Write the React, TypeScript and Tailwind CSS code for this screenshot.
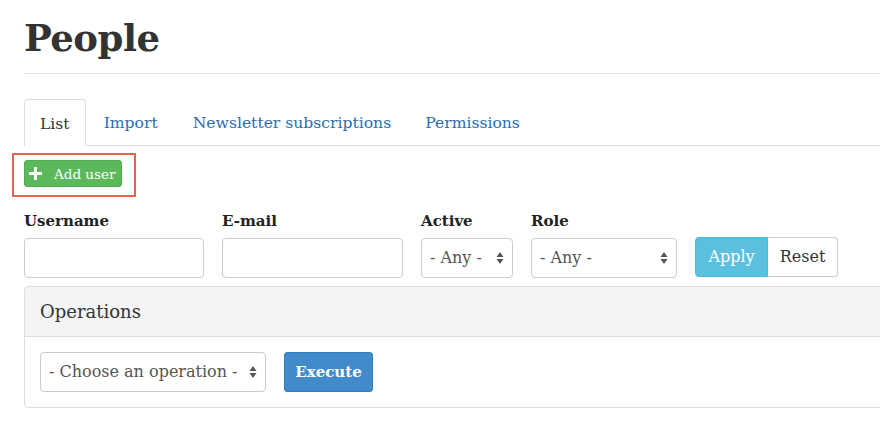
import React from "react";

const serif = { fontFamily: '"DejaVu Serif", "Liberation Serif", serif' };

function Arrows() {
  return (
    <svg width="8" height="14" viewBox="0 0 8 14" className="shrink-0">
      <path d="M4 1 L7.5 6 H0.5 Z" fill="#555" />
      <path d="M4 13 L7.5 8 H0.5 Z" fill="#555" />
    </svg>
  );
}

function FakeSelect({ label, w }: { label: string; w: string }) {
  return (
    <div
      className={`${w} h-[40px] flex items-center justify-between pl-[8px] pr-[8px] border border-[#ccc] rounded-[4px] bg-white text-[16px] text-[#555]`}
    >
      <span className="whitespace-nowrap">{label}</span>
      <Arrows />
    </div>
  );
}

export default function App() {
  return (
    <div className="w-[880px] h-[424px] overflow-hidden bg-white text-[#333]" style={serif}>
      <div className="pl-[24px]">
        <h1 className="pt-[15px] text-[37px] leading-[47px] font-bold text-[#333] tracking-[-0.5px]">People</h1>
        <div className="mt-[11px] border-t border-[#e5e5e5]" />
        <div className="mt-[25px] flex items-end border-b border-[#ddd] h-[47px] text-[15.6px]">
          <div className="h-[47px] px-[15px] pt-[5px] flex items-center border border-[#ddd] border-b-white rounded-t-[4px] -mb-px bg-white text-[#333]">
            List
          </div>
          <div className="h-[47px] px-[18px] pt-[5px] flex items-center text-[#2a6db0]">Import</div>
          <div className="h-[47px] px-[17px] pt-[5px] flex items-center text-[#2a6db0]">Newsletter subscriptions</div>
          <div className="h-[47px] px-[17px] pt-[5px] flex items-center text-[#2a6db0]">Permissions</div>
        </div>
        <div className="mt-[7px] -ml-[12px] w-[124px] h-[44px] border-2 border-[#e8604f] pl-[10px] pt-[5px]">
          <div className="w-[98px] h-[27px] bg-[#5cb85c] border border-[#4cae4c] rounded-[3px] flex items-center pl-[4px] gap-[12px] text-white text-[13.5px] whitespace-nowrap">
            <svg width="13" height="13" viewBox="0 0 13 13">
              <path d="M5 0 H8 V5 H13 V8 H8 V13 H5 V8 H0 V5 H5 Z" fill="#fff" />
            </svg>
            <span className="pt-px">Add user</span>
          </div>
        </div>
        <div className="mt-[13px] flex items-end">
          <div className="flex flex-col w-[180px] mr-[18px]">
            <label className="text-[15px] font-bold text-[#222] leading-[22px]">Username</label>
            <div className="mt-[6px] h-[40px] border border-[#ccc] rounded-[4px]" />
          </div>
          <div className="flex flex-col w-[181px] mr-[18px]">
            <label className="text-[15px] font-bold text-[#222] leading-[22px]">E-mail</label>
            <div className="mt-[6px] h-[40px] border border-[#ccc] rounded-[4px]" />
          </div>
          <div className="flex flex-col w-[92px] mr-[18px]">
            <label className="text-[15px] font-bold text-[#222] leading-[22px]">Active</label>
            <div className="mt-[6px]"><FakeSelect label="- Any -" w="w-[92px]" /></div>
          </div>
          <div className="flex flex-col w-[146px] mr-[18px]">
            <label className="text-[15px] font-bold text-[#222] leading-[22px]">Role</label>
            <div className="mt-[6px]"><FakeSelect label="- Any -" w="w-[146px]" /></div>
          </div>
          <div className="flex mb-px">
            <div className="w-[73px] h-[40px] bg-[#5bc0de] border border-[#46b8da] rounded-l-[4px] flex items-center justify-center text-white text-[16px]">Apply</div>
            <div className="w-[70px] h-[40px] bg-white border border-[#ccc] border-l-0 rounded-r-[4px] flex items-center justify-center text-[#333] text-[16px]">Reset</div>
          </div>
        </div>
        <div className="mt-[8px] w-[880px] border border-[#ddd] rounded-[4px]">
          <div className="h-[50px] bg-[#f4f4f4] border-b border-[#ddd] flex items-center pl-[15px] text-[18px] text-[#333] rounded-t-[4px]">
            Operations
          </div>
          <div className="px-[15px] py-[15px] flex items-center gap-[18px]">
            <FakeSelect label="- Choose an operation -" w="w-[226px]" />
            <div className="w-[89px] h-[40px] bg-[#428bca] border border-[#357ebd] rounded-[3px] flex items-center justify-center text-white font-bold text-[15px]">Execute</div>
          </div>
        </div>
      </div>
    </div>
  );
}
